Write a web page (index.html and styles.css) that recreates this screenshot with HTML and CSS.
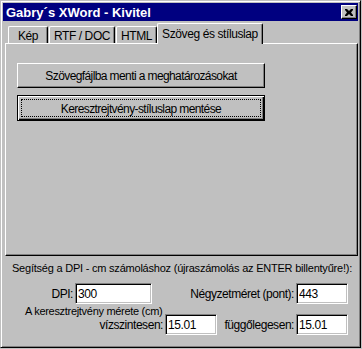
FILE: index.html
```html
<!DOCTYPE html>
<html lang="hu">
<head>
    <meta charset="UTF-8">
    <title>Gabry´s XWord - Kivitel</title>
    <link rel="stylesheet" href="styles.css">
</head>
<body>
    <div class="window">
        <div class="titlebar">
            <span class="title">Gabry´s XWord - Kivitel</span>
            <span class="close">
                <svg width="8" height="7" viewBox="0 0 8 7">
                    <path d="M0 0h2l2 2 2-2h2v1L6 3.5 8 6v1H6L4 5 2 7H0V6l2-2.5L0 1z" fill="#000"/>
                </svg>
            </span>
        </div>

        <div class="tabs">
            <div class="tab tab-kep">Kép</div>
            <div class="tab tab-rtf">RTF / DOC</div>
            <div class="tab tab-html">HTML</div>
            <div class="tab active">Szöveg és stíluslap</div>
        </div>

        <div class="panel">
            <button class="btn">Szövegfájlba menti a meghatározásokat</button>
            <button class="btn default"><span class="focus">Keresztrejtvény-stíluslap mentése</span></button>
        </div>

        <div class="calc">
            <p class="hint">Segítség a DPI - cm számoláshoz (újraszámolás az ENTER billentyűre!):</p>
            <div class="row">
                <label class="lbl lbl-dpi" for="dpi">DPI:</label>
                <input class="field field-dpi" id="dpi" type="text" value="300">
                <label class="lbl lbl-pont" for="pont">Négyzetméret (pont):</label>
                <input class="field" id="pont" type="text" value="443">
            </div>
            <p class="sub">A keresztrejtvény mérete (cm)</p>
            <div class="row row-size">
                <label class="lbl lbl-viz" for="viz">vízszintesen:</label>
                <input class="field" id="viz" type="text" value="15.01">
                <label class="lbl lbl-fugg" for="fugg">függőlegesen:</label>
                <input class="field" id="fugg" type="text" value="15.01">
            </div>
        </div>
    </div>
</body>
</html>
```

FILE: styles.css
```css
body {
    margin: 0;
    background: #c0c0c0;
    font-family: "Liberation Sans", Arial, sans-serif;
    font-size: 11px;
    letter-spacing: -0.22px;
    color: #000;
}

.window {
    box-sizing: border-box;
    width: 361px;
    height: 348px;
    padding: 2px;
    border: 1px solid;
    border-color: #c0c0c0 #000 #000 #c0c0c0;
    box-shadow: inset 1px 1px 0 #fff, inset -1px -1px 0 #808080;
    background: #c0c0c0;
}

.titlebar {
    display: flex;
    align-items: center;
    justify-content: space-between;
    height: 18px;
    padding: 0 1px 0 3px;
    background: #000080;
    color: #fff;
}

.title {
    font-weight: bold;
    font-size: 13px;
    letter-spacing: 0;
}

.close {
    box-sizing: border-box;
    display: flex;
    align-items: center;
    justify-content: center;
    width: 16px;
    height: 14px;
    background: #c0c0c0;
    border: 1px solid;
    border-color: #fff #000 #000 #fff;
    box-shadow: inset -1px -1px 0 #808080;
}

.tabs {
    display: flex;
    align-items: flex-end;
    height: 20px;
    margin-top: 2px;
    padding-left: 5px;
    position: relative;
    z-index: 1;
}

.tab {
    box-sizing: border-box;
    height: 17px;
    margin-right: 1px;
    padding-top: 2px;
    text-align: center;
    font-size: 12px;
    letter-spacing: -0.4px;
    border: 1px solid;
    border-color: #fff #000 transparent #fff;
    border-bottom: none;
    border-radius: 2px 2px 0 0;
    box-shadow: inset -1px 0 0 #808080;
}

.tab-kep { width: 40px; }
.tab-rtf { width: 66px; }
.tab-html { width: 41px; }

.tab.active {
    width: 106px;
    height: 21px;
    margin-left: -1px;
    margin-bottom: -1px;
    padding-top: 3px;
    background: #c0c0c0;
}

.panel {
    box-sizing: border-box;
    display: flex;
    flex-direction: column;
    align-items: flex-start;
    gap: 7px;
    width: 353px;
    height: 213px;
    margin-left: 2px;
    padding: 19px 0 0 11px;
    border: 1px solid;
    border-color: #fff #000 #000 #fff;
    box-shadow: inset -1px -1px 0 #808080;
}

.btn {
    box-sizing: border-box;
    width: 248px;
    height: 25px;
    padding: 0;
    font-family: inherit;
    font-size: 12px;
    letter-spacing: -0.6px;
    color: #000;
    background: #c0c0c0;
    border: 1px solid;
    border-color: #fff #000 #000 #fff;
    box-shadow: inset -1px -1px 0 #808080;
}

.btn.default {
    height: 26px;
    padding: 3px;
    border: 1px solid #000;
    box-shadow: inset 1px 1px 0 #fff, inset -1px -1px 0 #000, inset -2px -2px 0 #808080;
}

.focus {
    display: block;
    height: 100%;
    box-sizing: border-box;
    padding-top: 2px;
    border: 1px dotted #000;
}

.calc {
    padding: 6px 0 0 9px;
}

.hint,
.sub {
    margin: 0;
    white-space: nowrap;
    line-height: 13px;
}

.sub {
    margin-top: 2px;
    padding-left: 13px;
    line-height: 11px;
    letter-spacing: -0.3px;
}

.row {
    display: flex;
    align-items: center;
    margin-top: 8px;
}

.row-size {
    margin-top: -3px;
}

.lbl {
    box-sizing: border-box;
    text-align: right;
    padding-right: 2px;
    font-size: 12px;
    letter-spacing: -0.45px;
}

.lbl-dpi { width: 63px; }
.lbl-pont { width: 144px; }
.lbl-viz { width: 153px; }
.lbl-fugg { width: 79px; }

.field {
    box-sizing: border-box;
    width: 52px;
    height: 21px;
    padding: 0 2px;
    font-family: inherit;
    font-size: 12px;
    letter-spacing: -0.4px;
    background: #fff;
    border: 1px solid;
    border-color: #808080 #fff #fff #808080;
    box-shadow: inset 1px 1px 0 #000, inset -1px -1px 0 #c0c0c0;
    outline: none;
}

.field-dpi { width: 77px; }
```
